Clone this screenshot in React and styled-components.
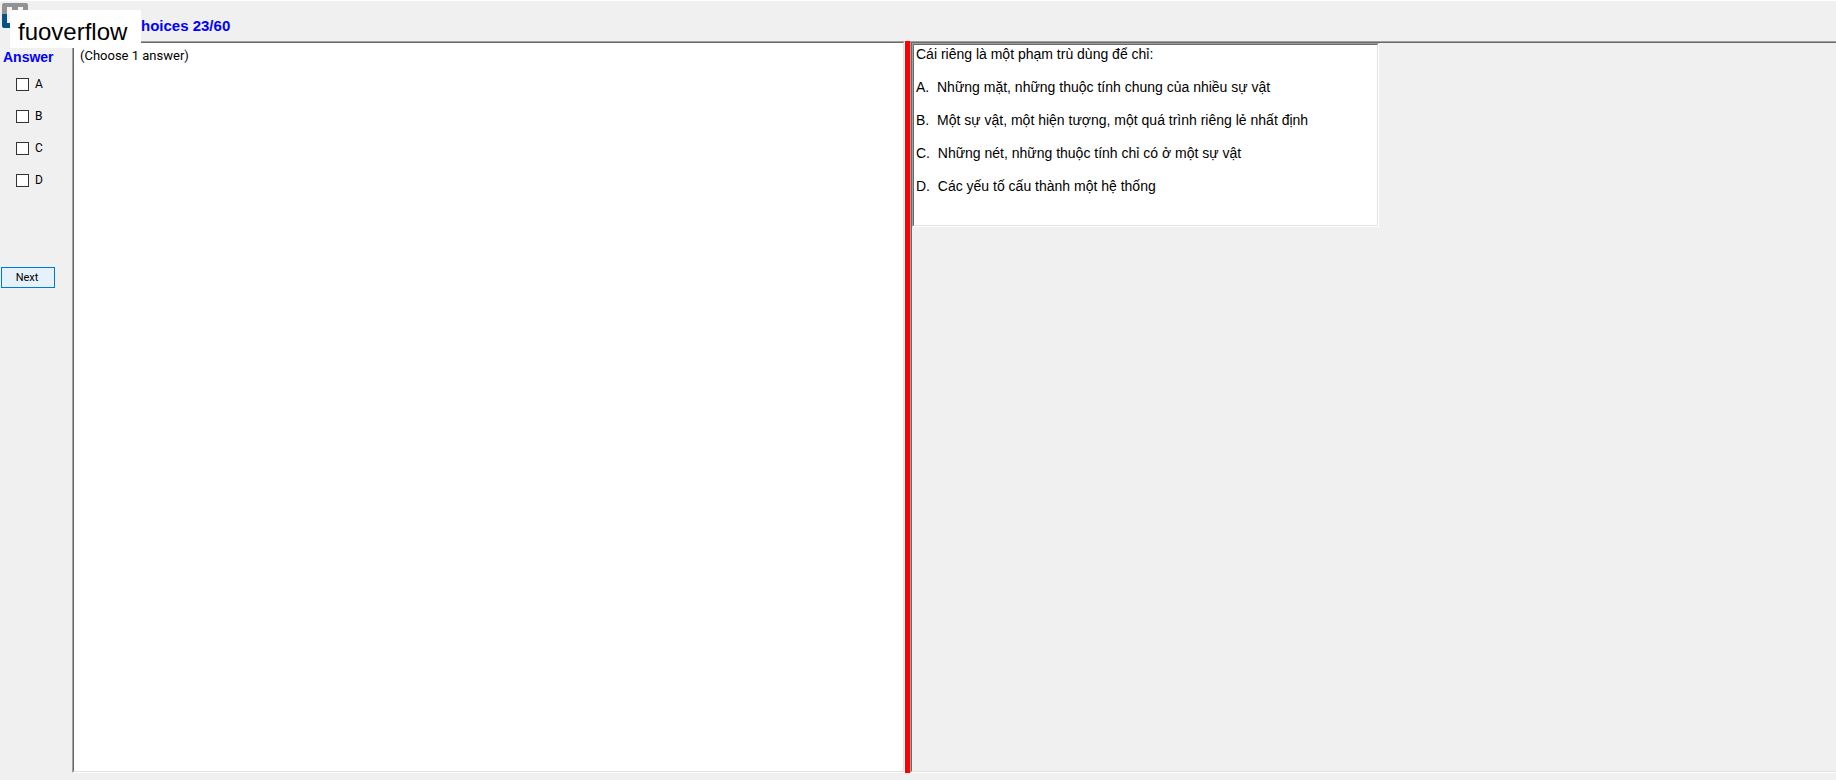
import React, { useState } from "react";
import styled, { createGlobalStyle, css } from "styled-components";

const GlobalStyle = createGlobalStyle`
  * { box-sizing: border-box; }
  body {
    margin: 0;
    background: #f0f0f0;
    color: #000;
    font-family: "Liberation Sans", Arial, sans-serif;
  }
`;

const sunken = css`
  border: 1px solid;
  border-color: #a0a0a0 #fff #fff #a0a0a0;
`;

const sunkenInner = css`
  border: 1px solid;
  border-color: #696969 #e3e3e3 #e3e3e3 #696969;
`;

const Window = styled.div`
  display: flex;
  flex-direction: column;
  min-height: 100vh;
  padding-bottom: 7px;
  border-top: 1px solid #fff;
  overflow: hidden;
`;

const Header = styled.header`
  position: relative;
  height: 40px;
  padding: 16px 0 0 141px;
`;

const Title = styled.h1`
  margin: 0;
  font-size: 15px;
  line-height: 17px;
  color: #0000ff;
`;

const LogoIcon = styled.svg`
  position: absolute;
  top: 2px;
  left: 2px;
`;

const Watermark = styled.div`
  position: absolute;
  top: 9px;
  left: 10px;
  z-index: 1;
  width: 131px;
  padding: 7px 8px 1px;
  background: #fff;
  font-size: 24px;
  line-height: 30px;
`;

const Main = styled.main`
  flex: 1;
  display: flex;
`;

const Sidebar = styled.form`
  flex: none;
  width: 72px;
  padding: 7px 0 0 1px;
`;

const Options = styled.fieldset`
  display: flex;
  flex-direction: column;
  gap: 16px;
  margin: 0 0 79px;
  padding: 0;
  border: 0;
`;

const Legend = styled.legend`
  margin-bottom: 10px;
  padding: 0 2px;
  font-size: 14px;
  font-weight: bold;
  line-height: 18px;
  color: #0000ff;
`;

const Option = styled.label`
  display: flex;
  align-items: center;
  gap: 6px;
  height: 16px;
  padding-left: 15px;
  font: 12px/16px Roboto, sans-serif;
`;

const Checkbox = styled.input`
  appearance: none;
  width: 13px;
  height: 13px;
  margin: 0;
  border: 1px solid #333;
  background: #fff;

  &:checked {
    box-shadow: inset 0 0 0 2px #fff;
    background: #333;
  }
`;

const NextButton = styled.button`
  display: block;
  width: 54px;
  height: 21px;
  padding: 0 2px 0 0;
  border: 1px solid #0078d7;
  background: #e5f1fb;
  color: #000;
  font: 11px/19px Roboto, sans-serif;
`;

const Frame = styled.section`
  ${sunken}
  flex: ${(p) => p.$grow} 1 0;
  display: flex;
  min-width: 0;
  ${(p) => p.$bleed && "border-right: 0;"}
`;

const FrameBody = styled.div`
  ${sunkenInner}
  flex: 1;
  min-width: 0;
  background: ${(p) => p.$fill};
  ${(p) => p.$bleed && "border-right: 0;"}
`;

const Hint = styled.p`
  margin: 0;
  padding: 5px 6px;
  font: 13px/16px Roboto, sans-serif;
`;

const Splitter = styled.div`
  flex: none;
  width: 5px;
  background: #ff0000;
`;

const QuestionBox = styled.div`
  ${sunken}
  width: 467px;
  max-width: 100%;
`;

const Question = styled.div`
  ${sunkenInner}
  display: flex;
  flex-direction: column;
  gap: 15px;
  padding: 0 2px 30px;
  background: #fff;
  font-size: 14px;
  line-height: 18px;
`;

const Line = styled.p`
  margin: 0;
  white-space: pre-wrap;
`;

const answers = [
  ["A", "Những mặt, những thuộc tính chung của nhiều sự vật"],
  ["B", "Một sự vật, một hiện tượng, một quá trình riêng lẻ nhất định"],
  ["C", "Những nét, những thuộc tính chỉ có ở một sự vật"],
  ["D", "Các yếu tố cấu thành một hệ thống"],
];

function Logo() {
  return (
    <LogoIcon width="26" height="26" viewBox="0 0 26 26" aria-hidden="true">
      <path d="M2 0H24Q26 0 26 2V11H0V2Q0 0 2 0Z" fill="#929292" />
      <path d="M5 4H10V11H5ZM16 4H21V11H16Z" fill="#f4f4f4" />
      <path d="M0 11H5V20H26V25H2Q0 25 0 23Z" fill="#075184" />
    </LogoIcon>
  );
}

export default function App() {
  const [checked, setChecked] = useState({});
  return (
    <>
      <GlobalStyle />
      <Window>
        <Header>
          <Logo />
          <Title>hoices 23/60</Title>
          <Watermark>fuoverflow</Watermark>
        </Header>
        <Main>
          <Sidebar onSubmit={(e) => e.preventDefault()}>
            <Options>
              <Legend>Answer</Legend>
              {answers.map(([key]) => (
                <Option key={key}>
                  <Checkbox
                    type="checkbox"
                    name={key}
                    checked={!!checked[key]}
                    onChange={(e) => setChecked({ ...checked, [key]: e.target.checked })}
                  />
                  {key}
                </Option>
              ))}
            </Options>
            <NextButton>Next</NextButton>
          </Sidebar>
          <Frame $grow={831}>
            <FrameBody $fill="#fff">
              <Hint>(Choose 1 answer)</Hint>
            </FrameBody>
          </Frame>
          <Splitter />
          <Frame $grow={925} $bleed>
            <FrameBody $fill="#f0f0f0" $bleed>
              <QuestionBox>
                <Question>
                  <Line>Cái riêng là một phạm trù dùng để chỉ:</Line>
                  {answers.map(([key, text]) => (
                    <Line key={key}>{`${key}.  ${text}`}</Line>
                  ))}
                </Question>
              </QuestionBox>
            </FrameBody>
          </Frame>
        </Main>
      </Window>
    </>
  );
}
